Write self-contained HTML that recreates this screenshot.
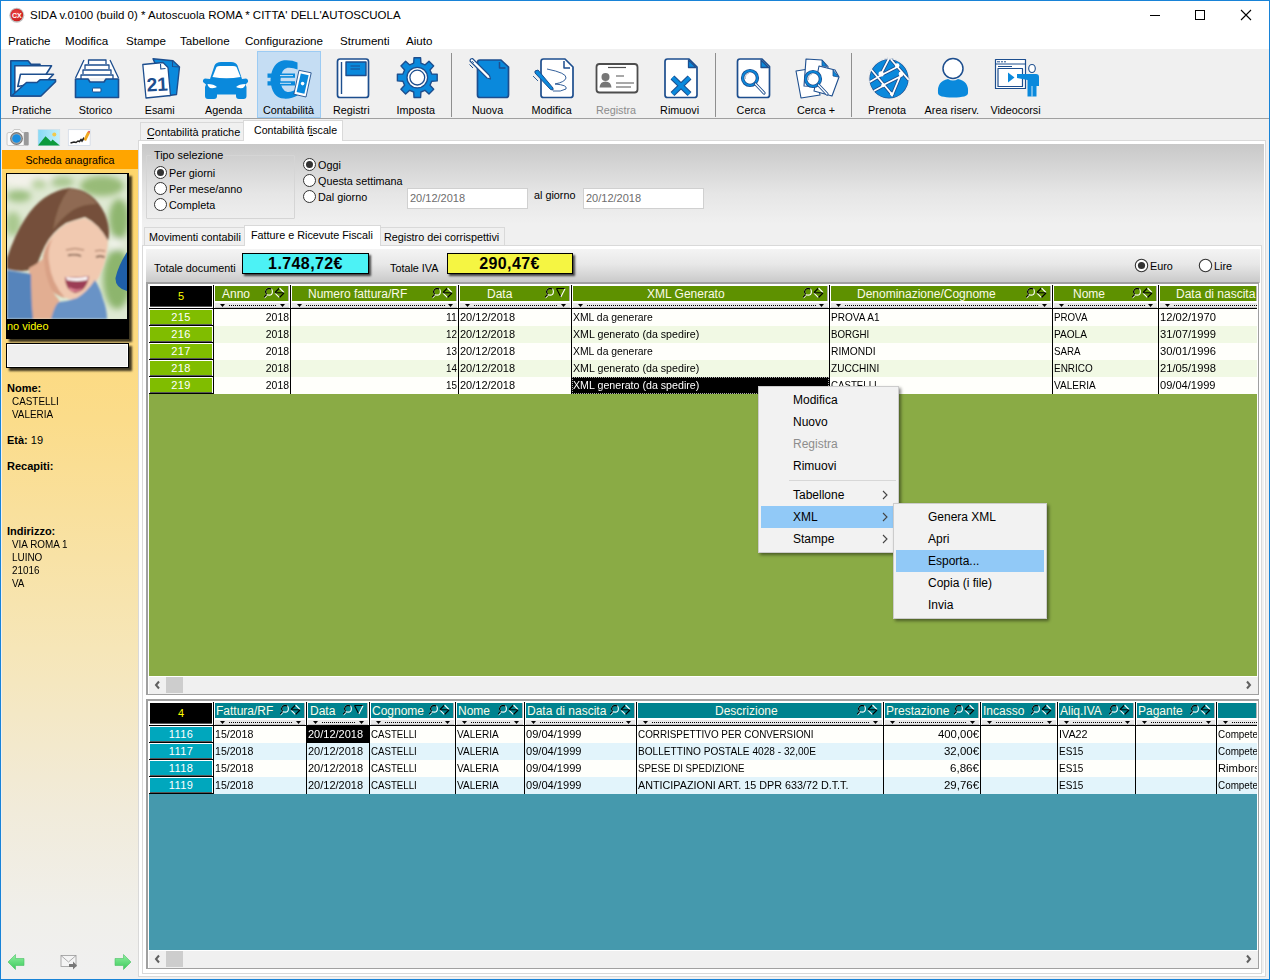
<!DOCTYPE html>
<html><head><meta charset="utf-8">
<style>
*{margin:0;padding:0;box-sizing:border-box}
html,body{width:1270px;height:980px;overflow:hidden}
body{position:relative;background:#f0f0f0;font-family:"Liberation Sans",sans-serif;font-size:12px;color:#000}
.a{position:absolute}
.t{position:absolute;white-space:nowrap;line-height:1}
</style></head><body>
<!-- window border -->
<div class="a" style="left:0;top:0;width:1270px;height:980px;border:1px solid #1883d7"></div>
<!-- title bar + menu -->
<div class="a" style="left:1px;top:1px;width:1268px;height:48px;background:#fff"></div>
<div class="t" style="left:30px;top:10px;font-size:11.5px">SIDA v.0100 (build 0) * Autoscuola ROMA * CITTA' DELL'AUTOSCUOLA</div>
<div class="t" style="left:8px;top:35px;font-size:11.6px">Pratiche</div>
<div class="t" style="left:65px;top:35px;font-size:11.6px">Modifica</div>
<div class="t" style="left:126px;top:35px;font-size:11.6px">Stampe</div>
<div class="t" style="left:180px;top:35px;font-size:11.6px">Tabellone</div>
<div class="t" style="left:245px;top:35px;font-size:11.6px">Configurazione</div>
<div class="t" style="left:340px;top:35px;font-size:11.6px">Strumenti</div>
<div class="t" style="left:406px;top:35px;font-size:11.6px">Aiuto</div>
<!-- title icon + controls -->
<svg class="a" style="left:0;top:0" width="1270" height="30" viewBox="0 0 1270 30">
<defs><radialGradient id="rg" cx="0.45" cy="0.4" r="0.6"><stop offset="0" stop-color="#f04848"/><stop offset="1" stop-color="#c81e1e"/></radialGradient></defs>
<circle cx="16.8" cy="15.2" r="7.5" fill="#9a9a9a" opacity="0.6"/>
<circle cx="16.8" cy="15" r="6.3" fill="url(#rg)"/>
<text x="16.8" y="17.6" font-family="Liberation Sans" font-size="7" font-weight="bold" fill="#fff" text-anchor="middle">CX</text>
<path d="M1150,15.5 L1160,15.5" stroke="#000" stroke-width="1"/>
<rect x="1195.5" y="10.5" width="9" height="9" fill="none" stroke="#000" stroke-width="1"/>
<path d="M1241,10 L1251,20 M1251,10 L1241,20" stroke="#000" stroke-width="1.1"/>
</svg>

<!-- toolbar -->
<div class="a" style="left:1px;top:49px;width:1268px;height:70px;background:#f0f0f0;border-bottom:1px solid #a0a0a0"></div>
<div class="a" style="left:257px;top:51px;width:64px;height:67px;background:#c5ddf3;border:1px solid #9ccbf3"></div>
<div class="a" style="left:451px;top:53px;width:1px;height:64px;background:#8f8f8f"></div>
<div class="a" style="left:715px;top:53px;width:1px;height:64px;background:#8f8f8f"></div>
<div class="a" style="left:851px;top:53px;width:1px;height:64px;background:#8f8f8f"></div>
<svg class="a" style="left:0;top:0" width="1270" height="120" viewBox="0 0 1270 120">
<g stroke="#1d4e8e" stroke-width="1.6" stroke-linejoin="round" fill="#0a89dc">
<!-- folder 10-56, 60-96 -->
<path d="M10.8,96 L10.8,60.8 L28,60.8 L31,64.2 L40,64.2 L40,96 Z"/>
<path d="M14.8,65.8 L51.5,65.8 L46,74.5 L46,80 L14.8,93 Z" fill="#fff"/>
<path d="M20.5,74.2 L53.5,74.2 L47,81 L17.8,86.5 Z" fill="#fff"/>
<path d="M11.5,96 L26.5,82.5 L37,82.5 L40,79.8 L55.5,79.8 L55.5,81.8 L41,96 Z"/>
<!-- drawer 75-119, 59-98 -->
<path d="M75.5,78 L84,60 L110,60 L118.5,78 Z" fill="#fff" stroke="none"/><path d="M75.5,78 L84,60 M110,60 L118.5,78" fill="none" stroke-width="1.3"/>
<path d="M88.5,64 L88.5,60 L106,60 L106,64 M85,69 L85,65 L109,65 L109,69 M83,74 L83,70 L111,70 L111,74 M81,79 L81,75 L113,75 L113,79" fill="none" stroke-width="1.3"/>
<path d="M75.5,79 L88,79 L90,82 L104,82 L106,79 L118.5,79 L118.5,97.5 L75.5,97.5 Z"/>
<rect x="92.5" y="88" width="8.5" height="4" rx="1" fill="#fff" stroke-width="1"/>
<!-- esami 142-180, 58-98 -->
<path d="M153,58.8 L173,60.8 L179.5,67 L176.5,94.5 L169,95.5 Z" stroke-width="1.4"/>
<path d="M172.5,61 L172.5,66.5 L179,67" fill="none" stroke-width="1.1"/>
<path d="M142.8,64.5 L163,62.5 L168,67.5 L170.5,95.5 L146,98 Z" fill="#fff" stroke-width="1.3"/>
<path d="M160.5,64 L160.8,69 L165.5,68.5" fill="none" stroke-width="1.1"/>
<text x="146.5" y="91" font-family="Liberation Sans" font-weight="bold" font-size="19" fill="#1d4e8e" stroke="none" transform="rotate(-3 157 84)">21</text>
<!-- car 202-248, 62-99 -->
<path d="M210,79 L214.5,65.5 Q216,62 221,62 L231,62 Q236,62 237.5,65.5 L242,79 L246,78.5 Q248.5,79 248,82 L245.5,84.5 L246.5,87 L246.5,96 Q246.5,99 243.5,99 L239,99 Q236,99 236,96 L236,94.5 L217,94.5 L217,96 Q217,99 214,99 L208,99 Q205,99 205,96 L205,87 L206,84.5 L203,82 Q202.5,79 205,78.5 Z" stroke="none"/>
<path d="M212.5,77 L216.5,67 Q217.5,66 220,66 L233,66 Q235.5,66 236.5,67 L240.5,77 Q226.5,79.5 212.5,77 Z" fill="#fff" stroke="none"/>
<path d="M207.5,84 Q214,84 217,87 Q215,88.5 210,88 Q207.5,86.5 207.5,84 Z M245.5,84 Q239,84 236,87 Q238,88.5 243,88 Q245.5,86.5 245.5,84 Z" fill="#fff" stroke="none"/>
<!-- euro 268-297 60-99 ; bill 296-311 70-97 -->
<path d="M297.5,62.5 Q292,59.8 284,60.3 Q271.5,62.5 270.5,80 Q271.5,97.8 284,98.6 Q292,99 297.5,95.5 L297.5,88 Q292.5,92.3 287.5,92 Q281,90.8 280.5,80 Q281,68.8 287.5,67.8 Q292.5,67.3 297.5,69.5 Z" stroke="none"/>
<path d="M267.5,73.5 L295,73.5 L295,77.8 L267.5,77.8 Z M267.5,81.2 L295,81.2 L295,85.5 L267.5,85.5 Z" stroke="none"/>
<path d="M280,75.6 L293,75.6 M280,83.3 L291,83.3" stroke="#e8f2fa" stroke-width="0.9"/>
<path d="M299,70.3 L311.2,72.8 L306,97 L293.8,94.2 Z" fill="#fff" stroke="#1d4e8e" stroke-width="0.9"/>
<path d="M300.8,73.5 L308.6,75.2 L304.4,93.8 L296.6,92 Z" stroke="none"/>
<circle cx="302.6" cy="83.6" r="1.8" fill="#fff" stroke="none"/>
<!-- registri 337-369 58-98 -->
<rect x="337.5" y="59" width="31" height="38.5" rx="2.5" fill="#fff" stroke-width="1.7"/>
<path d="M341.5,62 L341.5,94" fill="none" stroke-width="1.4"/>
<rect x="346" y="62" width="20" height="13.5" stroke-width="1.4"/>
<path d="M350.5,66 L360,66 M350.5,69 L360,69" stroke-width="1.1" fill="none"/>
<!-- gear 397-437 57-98 center 417,77.5 -->
<path id="gear" d="M413.7,63.2 L414.0,57.7 L420.6,57.7 L420.9,63.2 L424.9,64.9 L429.0,61.2 L433.7,65.9 L430.0,70.0 L431.7,74.0 L437.2,74.3 L437.2,80.9 L431.7,81.2 L430.0,85.2 L433.7,89.3 L429.0,94.0 L424.9,90.3 L420.9,92.0 L420.6,97.5 L414.0,97.5 L413.7,92.0 L409.7,90.3 L405.6,94.0 L400.9,89.3 L404.6,85.2 L402.9,81.2 L397.4,80.9 L397.4,74.3 L402.9,74.0 L404.6,70.0 L400.9,65.9 L405.6,61.2 L409.7,64.9 Z" stroke-width="1.4"/>
<circle cx="417.3" cy="77.6" r="10.3" fill="#fff" stroke-width="1.3"/>
<circle cx="417.3" cy="77.6" r="7.4" fill="#fff" stroke-width="1.3"/>
<!-- nuova 477-509 59-98 -->
<path d="M480,60 L501,60 L508.5,67 L508.5,95 Q508.5,97.5 506,97.5 L480,97.5 Q477.5,97.5 477.5,95 L477.5,62.5 Q477.5,60 480,60 Z" stroke-width="1.7"/>
<path d="M499.5,62 L499.5,68 L505.5,68" fill="none" stroke-width="1.5"/>
<path d="M472.5,58.5 L489.5,75.5 L490.5,79 L487,78 L470,61 Q470,58.5 472.5,58.5 Z" fill="#fff" stroke-width="1.1"/>
<path d="M469.5,64.5 L473,68" fill="none" stroke-width="1"/><path d="M472,61 L474,63" fill="none" stroke-width="0.8"/>
<!-- modifica 541-573 58-98 -->
<path d="M543.5,59 L565,59 L573,67 L573,95 Q573,97.5 570.5,97.5 L543.5,97.5 Q541,97.5 541,95 L541,61.5 Q541,59 543.5,59 Z" fill="#fff" stroke-width="1.7"/>
<path d="M564,61 L564,68 L570,68" fill="none" stroke-width="1.5"/>
<path d="M547,69 Q567,73 566,78 Q565,82 555,84 Q568,85 566,89 Q561,92 553,91" fill="none" stroke-width="0.9"/>
<path d="M535,71 L538,70 L553,88 L553,90 L550.5,89.5 L535,73 Z" stroke-width="1"/>
<path d="M533,76 L538,81" fill="none" stroke-width="0.9"/>
<!-- registra card 595-638 63-93 -->
<rect x="596.5" y="64" width="41" height="28.5" rx="3" fill="#fff" stroke="#4d4d4d" stroke-width="1.8"/>
<path d="M608,67.5 L626,67.5" stroke="#4d4d4d" stroke-width="1.2" fill="none"/>
<circle cx="605.5" cy="77" r="4" fill="#777" stroke="none"/>
<path d="M599.5,87.5 Q600,81.5 605.5,81.5 Q611,81.5 611.5,87.5 Z" fill="#777" stroke="none"/>
<path d="M616,76 L624,76 M616,83 L634,83 M616,87 L631,87" stroke="#8c8c8c" stroke-width="1.3" fill="none"/>
<!-- rimuovi 665-698 58-98 -->
<path d="M667.5,59 L689,59 L697,67 L697,95 Q697,97.5 694.5,97.5 L667.5,97.5 Q665,97.5 665,95 L665,61.5 Q665,59 667.5,59 Z" fill="#fff" stroke-width="1.7"/>
<path d="M688.5,60 L688.5,67.5 L696,67.5 Z" stroke-width="1.3"/>
<path d="M672.5,77.5 L689.5,94 M689.5,77.5 L672.5,94" stroke="#1d4e8e" stroke-width="5.6" stroke-linecap="butt"/><path d="M672.5,77.5 L689.5,94 M689.5,77.5 L672.5,94" stroke="#0a89dc" stroke-width="3.6" stroke-linecap="butt"/>
<!-- cerca 737-770 58-98 -->
<path d="M740,59 L762,59 L769.5,66.5 L769.5,95 Q769.5,97.5 767,97.5 L740,97.5 Q737.5,97.5 737.5,95 L737.5,61.5 Q737.5,59 740,59 Z" fill="#fff" stroke-width="1.7"/>
<path d="M761,60 L761,67.5 L768.5,67.5 Z" stroke-width="1.3"/>
<circle cx="750" cy="78" r="7.4" fill="#fff" stroke="#1d4e8e" stroke-width="3.4"/><circle cx="750" cy="78" r="7.4" fill="none" stroke="#0a89dc" stroke-width="1.8"/><path d="M745.5,79 A5,5 0 0 1 749,73" fill="none" stroke="#9aa8b8" stroke-width="0.8"/>
<path d="M755.5,84 L764,93" stroke="#1d4e8e" stroke-width="3.2" stroke-linecap="round"/>
<path d="M755.5,84 L764,93" stroke="#fff" stroke-width="1.3" stroke-linecap="round"/>
<!-- cerca + 795-839 58-98 -->
<path d="M796,71 L815,68 L820,95 L801,98 Z" fill="#fff" stroke-width="1.1"/>
<path d="M806,59 L822,60 L828,66.5 L826,87 L804,86 Z" fill="#fff" stroke-width="1.1"/>
<path d="M822,60 L822,66 L827,66.5 Z" stroke-width="0.8"/>
<path d="M819,66 L835,70 L839,77 L832,96 L814,91 Z" fill="#fff" stroke-width="1.1"/>
<path d="M833,70 L833,76 L838.5,77 Z" stroke-width="0.8"/>
<circle cx="813" cy="79" r="7.4" fill="#fff" stroke="#1d4e8e" stroke-width="3.4"/><circle cx="813" cy="79" r="7.4" fill="none" stroke="#0a89dc" stroke-width="1.8"/><path d="M808.5,80 A5,5 0 0 1 812,74" fill="none" stroke="#9aa8b8" stroke-width="0.8"/>
<path d="M818.5,85 L827,94" stroke="#1d4e8e" stroke-width="3.2" stroke-linecap="round"/>
<path d="M818.5,85 L827,94" stroke="#fff" stroke-width="1.3" stroke-linecap="round"/>
<!-- globe 869-909 59-98 -->
<circle cx="889" cy="78.8" r="19.6" stroke-width="1.3"/>
<path d="M889,58.5 L881.1,73.9 M871,69.3 L891.7,94.1 M869.7,82.1 L881.1,75.3 L898.1,66.6 M884.3,84.4 L902.7,75.3 M890.8,59.2 L908.7,79.9 M900.9,74.3 L891.7,96.4 M873.8,90.9 L883.4,85.8" stroke="#1d4e8e" stroke-width="3.4" fill="none"/>
<path d="M889,58.5 L881.1,73.9 M871,69.3 L891.7,94.1 M869.7,82.1 L881.1,75.3 L898.1,66.6 M884.3,84.4 L902.7,75.3 M890.8,59.2 L908.7,79.9 M900.9,74.3 L891.7,96.4 M873.8,90.9 L883.4,85.8" stroke="#fff" stroke-width="1.7" fill="none"/>
<circle cx="881.1" cy="73.9" r="2.6" fill="#fff" stroke="none"/>
<circle cx="897.2" cy="65.6" r="2.3" fill="#fff" stroke="none"/>
<circle cx="900.9" cy="73.9" r="2.3" fill="#fff" stroke="none"/>
<circle cx="883" cy="85.4" r="1.8" fill="#fff" stroke="none"/>
<circle cx="891.7" cy="94.1" r="1.8" fill="#fff" stroke="none"/>
<circle cx="889" cy="78.8" r="20.2" fill="none" stroke="#f0f0f0" stroke-width="1.2"/>
<!-- person 937-969 58-98 -->
<circle cx="953" cy="68.5" r="10" fill="#fff" stroke-width="1.5"/>
<path d="M938,93 Q937,81 948,79 Q953,82 958,79 Q969,81 968,93 Q968,97.5 953,97.5 Q938,97.5 938,93 Z" stroke="none"/>
<!-- video 995-1039 59-97 -->
<rect x="995.5" y="59.5" width="30" height="29" fill="#fff" stroke-width="1.2"/>
<path d="M995.5,64 L1025.5,64 M997,61.8 L1000,61.8 M1001,61.8 L1003,61.8 M1004,61.8 L1006,61.8 M998,66.5 L1012,66.5" stroke-width="1" fill="none"/>
<rect x="998" y="68.5" width="24.5" height="18" fill="#fff" stroke-width="1.2"/>
<path d="M1008,72.5 L1014.5,77.5 L1008,82.5 Z" stroke="none"/>
<ellipse cx="1032" cy="68.5" rx="3.3" ry="4" fill="#fff" stroke-width="1.1"/>
<path d="M1017,74 L1036,74 Q1039,74 1039,77 L1039,86 L1036.5,86 L1036.5,96.5 L1027.5,96.5 L1027.5,80 L1017,78 Z" stroke="none"/>
<path d="M1032,86 L1032,96.5" stroke="#fff" stroke-width="0.8"/>
</g>
</svg>

<div class="t" style="left:-8.5px;top:105px;width:80px;text-align:center;font-size:10.8px;color:#000">Pratiche</div>
<div class="t" style="left:55.5px;top:105px;width:80px;text-align:center;font-size:10.8px;color:#000">Storico</div>
<div class="t" style="left:119.7px;top:105px;width:80px;text-align:center;font-size:10.8px;color:#000">Esami</div>
<div class="t" style="left:183.7px;top:105px;width:80px;text-align:center;font-size:10.8px;color:#000">Agenda</div>
<div class="t" style="left:248.5px;top:105px;width:80px;text-align:center;font-size:10.8px;color:#000">Contabilità</div>
<div class="t" style="left:311.3px;top:105px;width:80px;text-align:center;font-size:10.8px;color:#000">Registri</div>
<div class="t" style="left:375.8px;top:105px;width:80px;text-align:center;font-size:10.8px;color:#000">Imposta</div>
<div class="t" style="left:447.6px;top:105px;width:80px;text-align:center;font-size:10.8px;color:#000">Nuova</div>
<div class="t" style="left:511.6px;top:105px;width:80px;text-align:center;font-size:10.8px;color:#000">Modifica</div>
<div class="t" style="left:576.0px;top:105px;width:80px;text-align:center;font-size:10.8px;color:#8c8c8c">Registra</div>
<div class="t" style="left:639.6px;top:105px;width:80px;text-align:center;font-size:10.8px;color:#000">Rimuovi</div>
<div class="t" style="left:711.0px;top:105px;width:80px;text-align:center;font-size:10.8px;color:#000">Cerca</div>
<div class="t" style="left:776.0px;top:105px;width:80px;text-align:center;font-size:10.8px;color:#000">Cerca +</div>
<div class="t" style="left:847.0px;top:105px;width:80px;text-align:center;font-size:10.8px;color:#000">Prenota</div>
<div class="t" style="left:911.8px;top:105px;width:80px;text-align:center;font-size:10.8px;color:#000">Area riserv.</div>
<div class="t" style="left:975.5px;top:105px;width:80px;text-align:center;font-size:10.8px;color:#000">Videocorsi</div>
<!-- left panel -->
<div class="a" style="left:1px;top:120px;width:137px;height:859px;background:#f0f0f0"></div>
<svg class="a" style="left:0;top:120px" width="100" height="30" viewBox="0 120 100 30">
<path d="M7,134 Q7,132.5 9,132.5 L12,132.5 L14,129.5 L20,129.5 L22,132.5 L24,132.5 L24,145.5 L8.5,145.5 Q7,145.5 7,144 Z" fill="#fafafa" stroke="#c4c4c4" stroke-width="0.9"/>
<rect x="24" y="132" width="4.7" height="13.5" rx="1" fill="#999"/>
<circle cx="16.5" cy="138.5" r="6.4" fill="#787878"/>
<circle cx="16.5" cy="138.5" r="5.3" fill="#a8a8a8"/>
<circle cx="16.5" cy="138.5" r="4.3" fill="#1a8ee0"/>
<defs><linearGradient id="sky" x1="0" y1="0" x2="1" y2="0"><stop offset="0" stop-color="#86d9f6"/><stop offset="1" stop-color="#c3effb"/></linearGradient></defs>
<rect x="38" y="129.5" width="21.8" height="16" fill="url(#sky)" stroke="#d0dde6" stroke-width="0.6"/>
<path d="M38,145.5 L45.5,136.2 L51,141.5 L52.5,139.5 L59.8,145.5 Z" fill="#0c9a3c"/>
<circle cx="54.3" cy="134.6" r="2" fill="#f2c94c"/>
<rect x="68.3" y="129.7" width="21.8" height="15.8" fill="#fff" stroke="#ccd6e3" stroke-width="0.7"/>
<path d="M70.5,143 L74,142 L76,142.5 L78,141 L79.5,141.5 L81,139.5 L82,141 L83.5,138.5 L84.5,140" fill="none" stroke="#222" stroke-width="1.5"/>
<path d="M83.5,139.5 L87.5,131.5 L90,133 L86,141 Z" fill="#f0a820"/>
<path d="M88,132 L88.8,130.8 L90,131.5 L89.5,133 Z" fill="#e03030"/>
</svg>
<div class="a" style="left:2px;top:150px;width:136px;height:19px;background:#ffa500"></div>
<div class="t" style="left:2px;top:155px;width:136px;text-align:center;font-size:10.7px">Scheda anagrafica</div>
<div class="a" style="left:2px;top:169px;width:136px;height:810px;background:linear-gradient(#fed66b 0px,#fbdc8a 250px,#f6e6b8 480px,#f1ebda 640px,#f0efea 740px,#f0f0f0 810px)"></div>
<!-- photo -->
<div class="a" style="left:6px;top:173px;width:123px;height:166px;background:#000;box-shadow:3px 3px 2px rgba(0,0,0,0.75)"></div>
<svg class="a" style="left:7px;top:174px" width="120" height="145" viewBox="0 0 120 145">
<defs>
<filter id="bl" x="-30%" y="-30%" width="160%" height="160%"><feGaussianBlur stdDeviation="3.2"/></filter>
<filter id="bl2" x="-10%" y="-10%" width="120%" height="120%"><feGaussianBlur stdDeviation="0.8"/></filter>
</defs>
<rect width="120" height="145" fill="#dfe9d3"/>
<g filter="url(#bl)">
<ellipse cx="20" cy="5" rx="30" ry="8" fill="#f3f2ea"/>
<ellipse cx="12" cy="22" rx="12" ry="6" fill="#9fc183"/>
<ellipse cx="55" cy="8" rx="12" ry="5" fill="#a8c68e"/>
<ellipse cx="95" cy="12" rx="22" ry="10" fill="#98bb78"/>
<ellipse cx="112" cy="45" rx="10" ry="20" fill="#8fb670"/>
<ellipse cx="6" cy="50" rx="8" ry="12" fill="#aac990"/>
<ellipse cx="15" cy="70" rx="9" ry="6" fill="#eef2e6"/>
<ellipse cx="110" cy="105" rx="14" ry="30" fill="#8db56d"/>
<ellipse cx="108" cy="70" rx="7" ry="6" fill="#f0f3ea"/>
<ellipse cx="32" cy="10" rx="8" ry="5" fill="#b9d2a0"/>
</g>
<g filter="url(#bl2)">
<path d="M62,14 Q86,15 98,40 Q104,55 101,67 Q92,50 78,43 Q68,46 59,49 Q45,58 38,72 Q32,84 30,92 Q22,100 0,95 L0,84 Q8,60 18,45 Q35,18 62,14 Z" fill="#74503a"/>
<path d="M62,15 Q80,16 90,30 Q76,30 66,36 Q54,44 46,56 Q50,30 62,15 Z" fill="#8f6a52"/>
<path d="M36,83 Q38,64 59,50 Q68,46 78,44 Q92,50 101,67 Q100,85 95,96 Q90,110 83,113 Q76,124 66,126 Q50,122 44,116 Q34,100 36,83 Z" fill="#f1c9b0"/>
<path d="M36,83 Q34,100 44,116 Q50,122 58,124 Q44,108 42,88 Q40,74 46,64 Q38,72 36,83 Z" fill="#d9a186"/>
<path d="M22,94 Q30,90 37,84 Q38,110 52,126 Q54,136 46,145 L25,145 Z" fill="#e2ae92"/>
<path d="M0,96 Q12,98 24,100 Q24,125 26,145 L0,145 Z" fill="#5784bb"/>
<path d="M44,145 Q48,130 52,128 Q62,127 70,124 Q80,118 88,106 Q94,116 96,125 Q100,135 100,145 Z" fill="#6993c6"/>
<path d="M58,103 Q70,104 82,102 Q80,117 68,119 Q58,116 58,103 Z" fill="#9c3e55"/>
<path d="M59,103 Q70,105 81,102.5 L80,106 Q70,108 60,106 Z" fill="#fff"/>
<path d="M62,113 Q69,118 76,114 Q70,120 63,116 Z" fill="#e58a9a"/>
<path d="M61,81.5 Q67,79.5 74,82 M89,83 Q93,81.5 97.5,83" stroke="#5a3a2a" stroke-width="1.4" fill="none"/>
<path d="M59,76 Q68,73 77,76 M88,77 Q93,75.5 98,77" stroke="#9a6a52" stroke-width="1" fill="none"/>
</g>
<path d="M120,78 Q111,92 108.5,104 Q108,114 120,117 Z" fill="#1f5fa8"/>
</svg>
<div class="t" style="left:7px;top:321px;font-size:11px;color:#ffff00">no video</div>
<div class="a" style="left:6px;top:343px;width:123px;height:25px;background:#efefef;border:1px solid #000;box-shadow:inset 0 0 0 1px #fff,3px 3px 2px rgba(0,0,0,0.75)"></div>
<div class="t" style="left:7px;top:383px;font-size:11px;font-weight:bold">Nome:</div>
<div class="t" style="left:12px;top:396px;font-size:11px;transform:scaleX(0.9);transform-origin:0 0">CASTELLI</div>
<div class="t" style="left:12px;top:409px;font-size:11px;transform:scaleX(0.9);transform-origin:0 0">VALERIA</div>
<div class="t" style="left:7px;top:435px;font-size:11px"><b>Età:</b> 19</div>
<div class="t" style="left:7px;top:461px;font-size:11px;font-weight:bold">Recapiti:</div>
<div class="t" style="left:7px;top:526px;font-size:11px;font-weight:bold">Indirizzo:</div>
<div class="t" style="left:12px;top:539px;font-size:11px;transform:scaleX(0.9);transform-origin:0 0">VIA ROMA 1</div>
<div class="t" style="left:12px;top:552px;font-size:11px;transform:scaleX(0.9);transform-origin:0 0">LUINO</div>
<div class="t" style="left:12px;top:565px;font-size:11px;transform:scaleX(0.9);transform-origin:0 0">21016</div>
<div class="t" style="left:12px;top:578px;font-size:11px;transform:scaleX(0.9);transform-origin:0 0">VA</div>
<svg class="a" style="left:0;top:945px" width="140" height="30" viewBox="0 945 140 30">
<defs><linearGradient id="grn" x1="0" y1="0" x2="0" y2="1"><stop offset="0" stop-color="#8ff0a0"/><stop offset="1" stop-color="#3cc95a"/></linearGradient></defs>
<path d="M8,962 L15.5,954.5 L15.5,958.5 L24,958.5 L24,965.5 L15.5,965.5 L15.5,969.5 Z" fill="url(#grn)" stroke="#4cc064" stroke-width="0.6"/>
<path d="M131,962 L123.5,954.5 L123.5,958.5 L115,958.5 L115,965.5 L123.5,965.5 L123.5,969.5 Z" fill="url(#grn)" stroke="#4cc064" stroke-width="0.6"/>
<rect x="61" y="955.5" width="15" height="11" fill="#f4f4f4" stroke="#9a9a9a" stroke-width="0.8"/>
<path d="M61,955.5 L68.5,962 L76,955.5" fill="none" stroke="#9a9a9a" stroke-width="0.8"/>
<path d="M69,964 L73,964 L73,961.5 L77,965.5 L73,969.5 L73,967 L69,967 Z" fill="#777"/>
</svg>
<!-- right outer tab page -->
<div class="a" style="left:140px;top:122px;width:104px;height:19px;background:#f0f0f0;border:1px solid #d9d9d9;border-bottom:none"></div>
<div class="t" style="left:147px;top:127px;font-size:10.9px">Contabilità pratiche</div>
<div class="a" style="left:147px;top:138px;width:7px;height:1px;background:#000"></div>
<div class="a" style="left:138px;top:140px;width:1128px;height:837px;background:#fff;border:1px solid #d9d9d9"></div>
<div class="a" style="left:243px;top:120px;width:100px;height:21px;background:#fff;border:1px solid #d9d9d9;border-bottom:none"></div><div class="a" style="left:244px;top:140px;width:98px;height:2px;background:#fff"></div>
<div class="t" style="left:254px;top:125px;font-size:10.6px">Contabilità fiscale</div>
<div class="a" style="left:309px;top:135px;width:4px;height:1px;background:#000"></div>
<div class="a" style="left:142px;top:144px;width:1122px;height:829px;background:linear-gradient(#c8c8c8 0px,#e6e6e6 50px,#f0f0f0 80px,#f0f0f0 100%)"></div>
<!-- group box -->
<div class="a" style="left:146px;top:155px;width:149px;height:64px;border:1px solid #d5d5d5;border-radius:1px"></div>
<div class="a" style="left:151px;top:149px;width:73px;height:12px;background:linear-gradient(#cbcbcb,#d2d2d2)"></div>
<div class="t" style="left:154px;top:150.0px;font-size:10.8px">Tipo selezione</div>
<svg class="a" style="left:140px;top:150px" width="200" height="70" viewBox="140 150 200 70">
<g fill="#fff" stroke="#333" stroke-width="1">
<circle cx="160.5" cy="172.5" r="6"/><circle cx="160.5" cy="188.5" r="6"/><circle cx="160.5" cy="204.5" r="6"/>
<circle cx="309.5" cy="164.5" r="6"/><circle cx="309.5" cy="180.5" r="6"/><circle cx="309.5" cy="196.5" r="6"/>
</g>
<circle cx="160.5" cy="172.5" r="3.5" fill="#333"/>
<circle cx="309.5" cy="164.5" r="3.5" fill="#333"/>
</svg>
<div class="t" style="left:169px;top:168.0px;font-size:10.8px">Per giorni</div>
<div class="t" style="left:169px;top:184.0px;font-size:10.8px">Per mese/anno</div>
<div class="t" style="left:169px;top:200.0px;font-size:10.8px">Completa</div>
<div class="t" style="left:318px;top:160.0px;font-size:10.8px">Oggi</div>
<div class="t" style="left:318px;top:176.0px;font-size:10.8px">Questa settimana</div>
<div class="t" style="left:318px;top:192.0px;font-size:10.8px">Dal giorno</div>
<div class="a" style="left:407px;top:188px;width:121px;height:21px;background:#fff;border:1px solid #d0d0d0"></div>
<div class="t" style="left:410px;top:193px;font-size:11px;color:#6d6d6d">20/12/2018</div>
<div class="t" style="left:534px;top:190.0px;font-size:10.8px">al giorno</div>
<div class="a" style="left:583px;top:188px;width:121px;height:21px;background:#fff;border:1px solid #d0d0d0"></div>
<div class="t" style="left:586px;top:193px;font-size:11px;color:#6d6d6d">20/12/2018</div>
<!-- inner tabs -->
<div class="a" style="left:144px;top:227px;width:101px;height:19px;background:#f0f0f0;border:1px solid #d9d9d9;border-bottom:none"></div>
<div class="t" style="left:149px;top:232px;font-size:10.8px">Movimenti contabili</div>
<div class="a" style="left:380px;top:227px;width:125px;height:19px;background:#f0f0f0;border:1px solid #d9d9d9;border-bottom:none"></div>
<div class="t" style="left:384px;top:232px;font-size:10.8px">Registro dei corrispettivi</div>
<div class="a" style="left:142px;top:245px;width:1120px;height:729px;background:#fff;border:1px solid #d9d9d9"></div>
<div class="a" style="left:244px;top:225px;width:137px;height:21px;background:#fff;border:1px solid #d9d9d9;border-bottom:none"></div><div class="a" style="left:245px;top:245px;width:135px;height:2px;background:#fff"></div>
<div class="t" style="left:251px;top:230.0px;font-size:10.8px">Fatture e Ricevute Fiscali</div>
<!-- totals panel -->
<div class="a" style="left:146px;top:249px;width:1114px;height:34px;background:linear-gradient(#f4f4f4 0px,#e8e8e8 15px,#c8c8c8 34px)"></div>
<div class="t" style="left:154px;top:263.0px;font-size:10.8px">Totale documenti</div>
<div class="a" style="left:242px;top:253px;width:127px;height:21px;background:#4cf2f5;border:1px solid #000;box-shadow:2px 2px 2px rgba(0,0,0,0.7)"></div>
<div class="t" style="left:242px;top:256px;width:127px;text-align:center;font-size:16px;font-weight:bold;letter-spacing:0.4px">1.748,72€</div>
<div class="t" style="left:390px;top:263.0px;font-size:10.8px">Totale IVA</div>
<div class="a" style="left:447px;top:253px;width:126px;height:21px;background:#f5f542;border:1px solid #000;box-shadow:2px 2px 2px rgba(0,0,0,0.7)"></div>
<div class="t" style="left:447px;top:256px;width:125px;text-align:center;font-size:16px;font-weight:bold;letter-spacing:0.4px">290,47€</div>
<svg class="a" style="left:1130px;top:255px" width="90" height="22" viewBox="1130 255 90 22">
<circle cx="1141.5" cy="265.5" r="6.2" fill="#fff" stroke="#333" stroke-width="1.1"/><circle cx="1141.5" cy="265.5" r="3.6" fill="#333"/>
<circle cx="1205.5" cy="265.5" r="6.2" fill="#fff" stroke="#333" stroke-width="1.1"/>
</svg>
<div class="t" style="left:1150px;top:261px;font-size:10.8px">Euro</div>
<div class="t" style="left:1214px;top:261px;font-size:10.8px">Lire</div>

<!-- GRIDS -->
<div class="a" style="left:146px;top:282px;width:1113px;height:413px;border-left:2px solid #a0a0a0;border-top:2px solid #a0a0a0;border-right:1px solid #a0a0a0;border-bottom:1px solid #a0a0a0;background:#fff"></div>
<div class="a" style="left:149px;top:284px;width:1108px;height:392px;background:#8aab45"></div>
<div class="a" style="left:149px;top:284px;width:1108px;height:110px;background:#fff"></div>
<div class="a" style="left:150px;top:286px;width:62px;height:21px;background:#000;border-bottom:1px solid #555"></div>
<div class="t" style="left:150px;top:291px;width:62px;text-align:center;font-size:11px;color:#ffff00">5</div>
<div class="a" style="left:149px;top:308px;width:1108px;height:1px;background:#000"></div>
<div class="a" style="left:215px;top:286px;width:74px;height:15px;background:#5e9100;border-right:1px solid #b4b4b4"></div>
<div class="t" style="left:222px;top:288px;font-size:12px;color:#fbfbe8">Anno</div>
<svg class="a" style="left:264px;top:287px" width="22" height="14" viewBox="0 0 22 14"><circle cx="5" cy="4.7" r="3.4" fill="none" stroke="#fff" stroke-width="1.1"/><path d="M2.6,7.1 A3.4,3.4 0 0 1 7.4,2.3" fill="none" stroke="#000" stroke-width="1.2"/><path d="M-0.3,10.6 L2.6,7.6" stroke="#000" stroke-width="1.2"/><path d="M0.5,11.2 L3.4,8.2" stroke="#fff" stroke-width="1"/><path d="M11,5.5 L15.5,1" stroke="#000" stroke-width="1.1" fill="none"/><path d="M15.5,1 L20,5.5" stroke="#fff" stroke-width="1.1" fill="none"/><path d="M11,6.2 L15.5,10.7" stroke="#fff" stroke-width="1.1" fill="none"/><path d="M20,6 L15.5,10.5" stroke="#000" stroke-width="1.1" fill="none"/><path d="M11,5.8 L19.5,5.8" stroke="#000" stroke-width="1" fill="none"/></svg>
<div class="a" style="left:215px;top:303px;width:74px;height:5px;background:#e8e8e8;border-bottom:1px solid #c8c8c8"></div><svg class="a" style="left:215px;top:303px" width="74" height="5" viewBox="0 0 74 5"><path d="M5,1 L10,1 L7.5,4 Z" fill="#000"/><path d="M65,1 L70,1 L67.5,4 Z" fill="#000"/><path d="M14,2.5 L62,2.5" stroke="#000" stroke-width="1" stroke-dasharray="1 1"/></svg>
<div class="a" style="left:292px;top:286px;width:165px;height:15px;background:#5e9100;border-right:1px solid #b4b4b4"></div>
<div class="t" style="left:308px;top:288px;font-size:12px;color:#fbfbe8">Numero fattura/RF</div>
<svg class="a" style="left:432px;top:287px" width="22" height="14" viewBox="0 0 22 14"><circle cx="5" cy="4.7" r="3.4" fill="none" stroke="#fff" stroke-width="1.1"/><path d="M2.6,7.1 A3.4,3.4 0 0 1 7.4,2.3" fill="none" stroke="#000" stroke-width="1.2"/><path d="M-0.3,10.6 L2.6,7.6" stroke="#000" stroke-width="1.2"/><path d="M0.5,11.2 L3.4,8.2" stroke="#fff" stroke-width="1"/><path d="M11,5.5 L15.5,1" stroke="#000" stroke-width="1.1" fill="none"/><path d="M15.5,1 L20,5.5" stroke="#fff" stroke-width="1.1" fill="none"/><path d="M11,6.2 L15.5,10.7" stroke="#fff" stroke-width="1.1" fill="none"/><path d="M20,6 L15.5,10.5" stroke="#000" stroke-width="1.1" fill="none"/><path d="M11,5.8 L19.5,5.8" stroke="#000" stroke-width="1" fill="none"/></svg>
<div class="a" style="left:292px;top:303px;width:165px;height:5px;background:#e8e8e8;border-bottom:1px solid #c8c8c8"></div><svg class="a" style="left:292px;top:303px" width="165" height="5" viewBox="0 0 165 5"><path d="M5,1 L10,1 L7.5,4 Z" fill="#000"/><path d="M156,1 L161,1 L158.5,4 Z" fill="#000"/><path d="M14,2.5 L153,2.5" stroke="#000" stroke-width="1" stroke-dasharray="1 1"/></svg>
<div class="a" style="left:460px;top:286px;width:110px;height:15px;background:#5e9100;border-right:1px solid #b4b4b4"></div>
<div class="t" style="left:487px;top:288px;font-size:12px;color:#fbfbe8">Data</div>
<svg class="a" style="left:545px;top:287px" width="22" height="14" viewBox="0 0 22 14"><circle cx="5" cy="4.7" r="3.4" fill="none" stroke="#fff" stroke-width="1.1"/><path d="M2.6,7.1 A3.4,3.4 0 0 1 7.4,2.3" fill="none" stroke="#000" stroke-width="1.2"/><path d="M-0.3,10.6 L2.6,7.6" stroke="#000" stroke-width="1.2"/><path d="M0.5,11.2 L3.4,8.2" stroke="#fff" stroke-width="1"/><path d="M11.5,1.5 L20,1.5 M11.5,1.5 L15.8,10" stroke="#000" stroke-width="1.1" fill="none"/><path d="M20,1.8 L15.8,10" stroke="#fff" stroke-width="1.1" fill="none"/></svg>
<div class="a" style="left:460px;top:303px;width:110px;height:5px;background:#e8e8e8;border-bottom:1px solid #c8c8c8"></div><svg class="a" style="left:460px;top:303px" width="110" height="5" viewBox="0 0 110 5"><path d="M5,1 L10,1 L7.5,4 Z" fill="#000"/><path d="M101,1 L106,1 L103.5,4 Z" fill="#000"/><path d="M14,2.5 L98,2.5" stroke="#000" stroke-width="1" stroke-dasharray="1 1"/></svg>
<div class="a" style="left:573px;top:286px;width:255px;height:15px;background:#5e9100;border-right:1px solid #b4b4b4"></div>
<div class="t" style="left:647px;top:288px;font-size:12px;color:#fbfbe8">XML Generato</div>
<svg class="a" style="left:803px;top:287px" width="22" height="14" viewBox="0 0 22 14"><circle cx="5" cy="4.7" r="3.4" fill="none" stroke="#fff" stroke-width="1.1"/><path d="M2.6,7.1 A3.4,3.4 0 0 1 7.4,2.3" fill="none" stroke="#000" stroke-width="1.2"/><path d="M-0.3,10.6 L2.6,7.6" stroke="#000" stroke-width="1.2"/><path d="M0.5,11.2 L3.4,8.2" stroke="#fff" stroke-width="1"/><path d="M11,5.5 L15.5,1" stroke="#000" stroke-width="1.1" fill="none"/><path d="M15.5,1 L20,5.5" stroke="#fff" stroke-width="1.1" fill="none"/><path d="M11,6.2 L15.5,10.7" stroke="#fff" stroke-width="1.1" fill="none"/><path d="M20,6 L15.5,10.5" stroke="#000" stroke-width="1.1" fill="none"/><path d="M11,5.8 L19.5,5.8" stroke="#000" stroke-width="1" fill="none"/></svg>
<div class="a" style="left:573px;top:303px;width:255px;height:5px;background:#e8e8e8;border-bottom:1px solid #c8c8c8"></div><svg class="a" style="left:573px;top:303px" width="255" height="5" viewBox="0 0 255 5"><path d="M5,1 L10,1 L7.5,4 Z" fill="#000"/><path d="M246,1 L251,1 L248.5,4 Z" fill="#000"/><path d="M14,2.5 L243,2.5" stroke="#000" stroke-width="1" stroke-dasharray="1 1"/></svg>
<div class="a" style="left:831px;top:286px;width:220px;height:15px;background:#5e9100;border-right:1px solid #b4b4b4"></div>
<div class="t" style="left:857px;top:288px;font-size:12px;color:#fbfbe8">Denominazione/Cognome</div>
<svg class="a" style="left:1026px;top:287px" width="22" height="14" viewBox="0 0 22 14"><circle cx="5" cy="4.7" r="3.4" fill="none" stroke="#fff" stroke-width="1.1"/><path d="M2.6,7.1 A3.4,3.4 0 0 1 7.4,2.3" fill="none" stroke="#000" stroke-width="1.2"/><path d="M-0.3,10.6 L2.6,7.6" stroke="#000" stroke-width="1.2"/><path d="M0.5,11.2 L3.4,8.2" stroke="#fff" stroke-width="1"/><path d="M11,5.5 L15.5,1" stroke="#000" stroke-width="1.1" fill="none"/><path d="M15.5,1 L20,5.5" stroke="#fff" stroke-width="1.1" fill="none"/><path d="M11,6.2 L15.5,10.7" stroke="#fff" stroke-width="1.1" fill="none"/><path d="M20,6 L15.5,10.5" stroke="#000" stroke-width="1.1" fill="none"/><path d="M11,5.8 L19.5,5.8" stroke="#000" stroke-width="1" fill="none"/></svg>
<div class="a" style="left:831px;top:303px;width:220px;height:5px;background:#e8e8e8;border-bottom:1px solid #c8c8c8"></div><svg class="a" style="left:831px;top:303px" width="220" height="5" viewBox="0 0 220 5"><path d="M5,1 L10,1 L7.5,4 Z" fill="#000"/><path d="M211,1 L216,1 L213.5,4 Z" fill="#000"/><path d="M14,2.5 L208,2.5" stroke="#000" stroke-width="1" stroke-dasharray="1 1"/></svg>
<div class="a" style="left:1054px;top:286px;width:103px;height:15px;background:#5e9100;border-right:1px solid #b4b4b4"></div>
<div class="t" style="left:1073px;top:288px;font-size:12px;color:#fbfbe8">Nome</div>
<svg class="a" style="left:1132px;top:287px" width="22" height="14" viewBox="0 0 22 14"><circle cx="5" cy="4.7" r="3.4" fill="none" stroke="#fff" stroke-width="1.1"/><path d="M2.6,7.1 A3.4,3.4 0 0 1 7.4,2.3" fill="none" stroke="#000" stroke-width="1.2"/><path d="M-0.3,10.6 L2.6,7.6" stroke="#000" stroke-width="1.2"/><path d="M0.5,11.2 L3.4,8.2" stroke="#fff" stroke-width="1"/><path d="M11,5.5 L15.5,1" stroke="#000" stroke-width="1.1" fill="none"/><path d="M15.5,1 L20,5.5" stroke="#fff" stroke-width="1.1" fill="none"/><path d="M11,6.2 L15.5,10.7" stroke="#fff" stroke-width="1.1" fill="none"/><path d="M20,6 L15.5,10.5" stroke="#000" stroke-width="1.1" fill="none"/><path d="M11,5.8 L19.5,5.8" stroke="#000" stroke-width="1" fill="none"/></svg>
<div class="a" style="left:1054px;top:303px;width:103px;height:5px;background:#e8e8e8;border-bottom:1px solid #c8c8c8"></div><svg class="a" style="left:1054px;top:303px" width="103" height="5" viewBox="0 0 103 5"><path d="M5,1 L10,1 L7.5,4 Z" fill="#000"/><path d="M94,1 L99,1 L96.5,4 Z" fill="#000"/><path d="M14,2.5 L91,2.5" stroke="#000" stroke-width="1" stroke-dasharray="1 1"/></svg>
<div class="a" style="left:1160px;top:286px;width:97px;height:15px;background:#5e9100;border-right:1px solid #b4b4b4"></div>
<div class="t" style="left:1176px;top:288px;font-size:12px;color:#fbfbe8">Data di nascita</div>
<div class="a" style="left:1160px;top:303px;width:97px;height:5px;background:#e8e8e8;border-bottom:1px solid #c8c8c8"></div><svg class="a" style="left:1160px;top:303px" width="97" height="5" viewBox="0 0 97 5"><path d="M5,1 L10,1 L7.5,4 Z" fill="#000"/><path d="M14,2.5 L97,2.5" stroke="#000" stroke-width="1" stroke-dasharray="1 1"/></svg>
<div class="a" style="left:214px;top:309px;width:1043px;height:17px;background:#fffffb"></div>
<div class="a" style="left:150px;top:310px;width:62px;height:15px;background:#80bd00;border-bottom:1px solid #555"></div>
<div class="a" style="left:149px;top:325px;width:64px;height:1px;background:#000"></div>
<div class="t" style="left:150px;top:312px;width:62px;text-align:center;font-size:11px;letter-spacing:0.4px;color:#fff">215</div>
<div class="t" style="left:214px;top:312px;width:75px;text-align:right;font-size:11px;color:#000;transform:scaleX(0.948);transform-origin:100% 0">2018</div>
<div class="t" style="left:291px;top:312px;width:166px;text-align:right;font-size:11px;color:#000;transform:scaleX(0.963);transform-origin:100% 0">11</div>
<div class="a" style="left:459px;top:309px;width:112px;height:17px;overflow:hidden"><div class="t" style="left:1px;top:3px;font-size:11px;color:#000;transform:scaleX(0.999);transform-origin:0 0">20/12/2018</div></div>
<div class="a" style="left:572px;top:309px;width:257px;height:17px;overflow:hidden"><div class="t" style="left:1px;top:3px;font-size:11px;color:#000;transform:scaleX(0.944);transform-origin:0 0">XML da generare</div></div>
<div class="a" style="left:830px;top:309px;width:222px;height:17px;overflow:hidden"><div class="t" style="left:1px;top:3px;font-size:11px;color:#000;transform:scaleX(0.915);transform-origin:0 0">PROVA A1</div></div>
<div class="a" style="left:1053px;top:309px;width:105px;height:17px;overflow:hidden"><div class="t" style="left:1px;top:3px;font-size:11px;color:#000;transform:scaleX(0.886);transform-origin:0 0">PROVA</div></div>
<div class="a" style="left:1159px;top:309px;width:98px;height:17px;overflow:hidden"><div class="t" style="left:1px;top:3px;font-size:11px;color:#000;transform:scaleX(1.017);transform-origin:0 0">12/02/1970</div></div>
<div class="a" style="left:214px;top:326px;width:1043px;height:17px;background:#f1f9e4"></div>
<div class="a" style="left:150px;top:327px;width:62px;height:15px;background:#80bd00;border-bottom:1px solid #555"></div>
<div class="a" style="left:149px;top:342px;width:64px;height:1px;background:#000"></div>
<div class="t" style="left:150px;top:329px;width:62px;text-align:center;font-size:11px;letter-spacing:0.4px;color:#fff">216</div>
<div class="t" style="left:214px;top:329px;width:75px;text-align:right;font-size:11px;color:#000;transform:scaleX(0.948);transform-origin:100% 0">2018</div>
<div class="t" style="left:291px;top:329px;width:166px;text-align:right;font-size:11px;color:#000;transform:scaleX(0.899);transform-origin:100% 0">12</div>
<div class="a" style="left:459px;top:326px;width:112px;height:17px;overflow:hidden"><div class="t" style="left:1px;top:3px;font-size:11px;color:#000;transform:scaleX(0.999);transform-origin:0 0">20/12/2018</div></div>
<div class="a" style="left:572px;top:326px;width:257px;height:17px;overflow:hidden"><div class="t" style="left:1px;top:3px;font-size:11px;color:#000;transform:scaleX(0.968);transform-origin:0 0">XML generato (da spedire)</div></div>
<div class="a" style="left:830px;top:326px;width:222px;height:17px;overflow:hidden"><div class="t" style="left:1px;top:3px;font-size:11px;color:#000;transform:scaleX(0.883);transform-origin:0 0">BORGHI</div></div>
<div class="a" style="left:1053px;top:326px;width:105px;height:17px;overflow:hidden"><div class="t" style="left:1px;top:3px;font-size:11px;color:#000;transform:scaleX(0.920);transform-origin:0 0">PAOLA</div></div>
<div class="a" style="left:1159px;top:326px;width:98px;height:17px;overflow:hidden"><div class="t" style="left:1px;top:3px;font-size:11px;color:#000;transform:scaleX(1.017);transform-origin:0 0">31/07/1999</div></div>
<div class="a" style="left:214px;top:343px;width:1043px;height:17px;background:#fffffb"></div>
<div class="a" style="left:150px;top:344px;width:62px;height:15px;background:#80bd00;border-bottom:1px solid #555"></div>
<div class="a" style="left:149px;top:359px;width:64px;height:1px;background:#000"></div>
<div class="t" style="left:150px;top:346px;width:62px;text-align:center;font-size:11px;letter-spacing:0.4px;color:#fff">217</div>
<div class="t" style="left:214px;top:346px;width:75px;text-align:right;font-size:11px;color:#000;transform:scaleX(0.948);transform-origin:100% 0">2018</div>
<div class="t" style="left:291px;top:346px;width:166px;text-align:right;font-size:11px;color:#000;transform:scaleX(0.899);transform-origin:100% 0">13</div>
<div class="a" style="left:459px;top:343px;width:112px;height:17px;overflow:hidden"><div class="t" style="left:1px;top:3px;font-size:11px;color:#000;transform:scaleX(0.999);transform-origin:0 0">20/12/2018</div></div>
<div class="a" style="left:572px;top:343px;width:257px;height:17px;overflow:hidden"><div class="t" style="left:1px;top:3px;font-size:11px;color:#000;transform:scaleX(0.944);transform-origin:0 0">XML da generare</div></div>
<div class="a" style="left:830px;top:343px;width:222px;height:17px;overflow:hidden"><div class="t" style="left:1px;top:3px;font-size:11px;color:#000;transform:scaleX(0.934);transform-origin:0 0">RIMONDI</div></div>
<div class="a" style="left:1053px;top:343px;width:105px;height:17px;overflow:hidden"><div class="t" style="left:1px;top:3px;font-size:11px;color:#000;transform:scaleX(0.885);transform-origin:0 0">SARA</div></div>
<div class="a" style="left:1159px;top:343px;width:98px;height:17px;overflow:hidden"><div class="t" style="left:1px;top:3px;font-size:11px;color:#000;transform:scaleX(1.017);transform-origin:0 0">30/01/1996</div></div>
<div class="a" style="left:214px;top:360px;width:1043px;height:17px;background:#f1f9e4"></div>
<div class="a" style="left:150px;top:361px;width:62px;height:15px;background:#80bd00;border-bottom:1px solid #555"></div>
<div class="a" style="left:149px;top:376px;width:64px;height:1px;background:#000"></div>
<div class="t" style="left:150px;top:363px;width:62px;text-align:center;font-size:11px;letter-spacing:0.4px;color:#fff">218</div>
<div class="t" style="left:214px;top:363px;width:75px;text-align:right;font-size:11px;color:#000;transform:scaleX(0.948);transform-origin:100% 0">2018</div>
<div class="t" style="left:291px;top:363px;width:166px;text-align:right;font-size:11px;color:#000;transform:scaleX(0.899);transform-origin:100% 0">14</div>
<div class="a" style="left:459px;top:360px;width:112px;height:17px;overflow:hidden"><div class="t" style="left:1px;top:3px;font-size:11px;color:#000;transform:scaleX(0.999);transform-origin:0 0">20/12/2018</div></div>
<div class="a" style="left:572px;top:360px;width:257px;height:17px;overflow:hidden"><div class="t" style="left:1px;top:3px;font-size:11px;color:#000;transform:scaleX(0.968);transform-origin:0 0">XML generato (da spedire)</div></div>
<div class="a" style="left:830px;top:360px;width:222px;height:17px;overflow:hidden"><div class="t" style="left:1px;top:3px;font-size:11px;color:#000;transform:scaleX(0.917);transform-origin:0 0">ZUCCHINI</div></div>
<div class="a" style="left:1053px;top:360px;width:105px;height:17px;overflow:hidden"><div class="t" style="left:1px;top:3px;font-size:11px;color:#000;transform:scaleX(0.905);transform-origin:0 0">ENRICO</div></div>
<div class="a" style="left:1159px;top:360px;width:98px;height:17px;overflow:hidden"><div class="t" style="left:1px;top:3px;font-size:11px;color:#000;transform:scaleX(1.017);transform-origin:0 0">21/05/1998</div></div>
<div class="a" style="left:214px;top:377px;width:1043px;height:17px;background:#fffffb"></div>
<div class="a" style="left:150px;top:378px;width:62px;height:15px;background:#80bd00;border-bottom:1px solid #555"></div>
<div class="a" style="left:149px;top:393px;width:64px;height:1px;background:#000"></div>
<div class="t" style="left:150px;top:380px;width:62px;text-align:center;font-size:11px;letter-spacing:0.4px;color:#fff">219</div>
<div class="t" style="left:214px;top:380px;width:75px;text-align:right;font-size:11px;color:#000;transform:scaleX(0.948);transform-origin:100% 0">2018</div>
<div class="t" style="left:291px;top:380px;width:166px;text-align:right;font-size:11px;color:#000;transform:scaleX(0.899);transform-origin:100% 0">15</div>
<div class="a" style="left:459px;top:377px;width:112px;height:17px;overflow:hidden"><div class="t" style="left:1px;top:3px;font-size:11px;color:#000;transform:scaleX(0.999);transform-origin:0 0">20/12/2018</div></div>
<div class="a" style="left:572px;top:377px;width:257px;height:17px;background:#000;outline:1px dotted #aaa;outline-offset:-1px"></div>
<div class="a" style="left:572px;top:377px;width:257px;height:17px;overflow:hidden"><div class="t" style="left:1px;top:3px;font-size:11px;color:#fff;transform:scaleX(0.968);transform-origin:0 0">XML generato (da spedire)</div></div>
<div class="a" style="left:830px;top:377px;width:222px;height:17px;overflow:hidden"><div class="t" style="left:1px;top:3px;font-size:11px;color:#000;transform:scaleX(0.881);transform-origin:0 0">CASTELLI</div></div>
<div class="a" style="left:1053px;top:377px;width:105px;height:17px;overflow:hidden"><div class="t" style="left:1px;top:3px;font-size:11px;color:#000;transform:scaleX(0.916);transform-origin:0 0">VALERIA</div></div>
<div class="a" style="left:1159px;top:377px;width:98px;height:17px;overflow:hidden"><div class="t" style="left:1px;top:3px;font-size:11px;color:#000;transform:scaleX(1.008);transform-origin:0 0">09/04/1999</div></div>
<div class="a" style="left:213px;top:285px;width:1px;height:109px;background:#000"></div>
<div class="a" style="left:290px;top:285px;width:1px;height:109px;background:#000"></div>
<div class="a" style="left:458px;top:285px;width:1px;height:109px;background:#000"></div>
<div class="a" style="left:571px;top:285px;width:1px;height:109px;background:#000"></div>
<div class="a" style="left:829px;top:285px;width:1px;height:109px;background:#000"></div>
<div class="a" style="left:1052px;top:285px;width:1px;height:109px;background:#000"></div>
<div class="a" style="left:1158px;top:285px;width:1px;height:109px;background:#000"></div>
<div class="a" style="left:148px;top:676px;width:1110px;height:18px;background:#f0f0f0;border-top:1px solid #fff;border-left:1px solid #fff"></div>
<div class="a" style="left:166px;top:677px;width:17px;height:16px;background:#cdcdcd"></div>
<svg class="a" style="left:148px;top:676px" width="1110" height="18" viewBox="0 0 1110 18"><path d="M11,5.5 L8,9 L11,12.5" fill="none" stroke="#606060" stroke-width="2"/><path d="M1099,5.5 L1102,9 L1099,12.5" fill="none" stroke="#606060" stroke-width="2"/></svg>
<div class="a" style="left:146px;top:699px;width:1113px;height:270px;border-left:2px solid #a0a0a0;border-top:2px solid #a0a0a0;border-right:1px solid #a0a0a0;border-bottom:1px solid #a0a0a0;background:#fff"></div>
<div class="a" style="left:149px;top:701px;width:1108px;height:249px;background:#4599ad"></div>
<div class="a" style="left:149px;top:701px;width:1108px;height:93px;background:#fff"></div>
<div class="a" style="left:150px;top:703px;width:62px;height:21px;background:#000;border-bottom:1px solid #555"></div>
<div class="t" style="left:150px;top:708px;width:62px;text-align:center;font-size:11px;color:#ffff00">4</div>
<div class="a" style="left:149px;top:725px;width:1108px;height:1px;background:#000"></div>
<div class="a" style="left:215px;top:703px;width:90px;height:15px;background:#00838f;border-right:1px solid #b4b4b4"></div>
<div class="t" style="left:216px;top:705px;font-size:12px;color:#fbfbe8">Fattura/RF</div>
<svg class="a" style="left:280px;top:704px" width="22" height="14" viewBox="0 0 22 14"><circle cx="5" cy="4.7" r="3.4" fill="none" stroke="#fff" stroke-width="1.1"/><path d="M2.6,7.1 A3.4,3.4 0 0 1 7.4,2.3" fill="none" stroke="#000" stroke-width="1.2"/><path d="M-0.3,10.6 L2.6,7.6" stroke="#000" stroke-width="1.2"/><path d="M0.5,11.2 L3.4,8.2" stroke="#fff" stroke-width="1"/><path d="M11,5.5 L15.5,1" stroke="#000" stroke-width="1.1" fill="none"/><path d="M15.5,1 L20,5.5" stroke="#fff" stroke-width="1.1" fill="none"/><path d="M11,6.2 L15.5,10.7" stroke="#fff" stroke-width="1.1" fill="none"/><path d="M20,6 L15.5,10.5" stroke="#000" stroke-width="1.1" fill="none"/><path d="M11,5.8 L19.5,5.8" stroke="#000" stroke-width="1" fill="none"/></svg>
<div class="a" style="left:215px;top:720px;width:90px;height:5px;background:#e8e8e8;border-bottom:1px solid #c8c8c8"></div><svg class="a" style="left:215px;top:720px" width="90" height="5" viewBox="0 0 90 5"><path d="M5,1 L10,1 L7.5,4 Z" fill="#000"/><path d="M81,1 L86,1 L83.5,4 Z" fill="#000"/><path d="M14,2.5 L78,2.5" stroke="#000" stroke-width="1" stroke-dasharray="1 1"/></svg>
<div class="a" style="left:308px;top:703px;width:60px;height:15px;background:#00838f;border-right:1px solid #b4b4b4"></div>
<div class="t" style="left:310px;top:705px;font-size:12px;color:#fbfbe8">Data</div>
<svg class="a" style="left:343px;top:704px" width="22" height="14" viewBox="0 0 22 14"><circle cx="5" cy="4.7" r="3.4" fill="none" stroke="#fff" stroke-width="1.1"/><path d="M2.6,7.1 A3.4,3.4 0 0 1 7.4,2.3" fill="none" stroke="#000" stroke-width="1.2"/><path d="M-0.3,10.6 L2.6,7.6" stroke="#000" stroke-width="1.2"/><path d="M0.5,11.2 L3.4,8.2" stroke="#fff" stroke-width="1"/><path d="M11.5,1.5 L20,1.5 M11.5,1.5 L15.8,10" stroke="#000" stroke-width="1.1" fill="none"/><path d="M20,1.8 L15.8,10" stroke="#fff" stroke-width="1.1" fill="none"/></svg>
<div class="a" style="left:308px;top:720px;width:60px;height:5px;background:#e8e8e8;border-bottom:1px solid #c8c8c8"></div><svg class="a" style="left:308px;top:720px" width="60" height="5" viewBox="0 0 60 5"><path d="M5,1 L10,1 L7.5,4 Z" fill="#000"/><path d="M51,1 L56,1 L53.5,4 Z" fill="#000"/><path d="M14,2.5 L48,2.5" stroke="#000" stroke-width="1" stroke-dasharray="1 1"/></svg>
<div class="a" style="left:371px;top:703px;width:83px;height:15px;background:#00838f;border-right:1px solid #b4b4b4"></div>
<div class="t" style="left:372px;top:705px;font-size:12px;color:#fbfbe8">Cognome</div>
<svg class="a" style="left:429px;top:704px" width="22" height="14" viewBox="0 0 22 14"><circle cx="5" cy="4.7" r="3.4" fill="none" stroke="#fff" stroke-width="1.1"/><path d="M2.6,7.1 A3.4,3.4 0 0 1 7.4,2.3" fill="none" stroke="#000" stroke-width="1.2"/><path d="M-0.3,10.6 L2.6,7.6" stroke="#000" stroke-width="1.2"/><path d="M0.5,11.2 L3.4,8.2" stroke="#fff" stroke-width="1"/><path d="M11,5.5 L15.5,1" stroke="#000" stroke-width="1.1" fill="none"/><path d="M15.5,1 L20,5.5" stroke="#fff" stroke-width="1.1" fill="none"/><path d="M11,6.2 L15.5,10.7" stroke="#fff" stroke-width="1.1" fill="none"/><path d="M20,6 L15.5,10.5" stroke="#000" stroke-width="1.1" fill="none"/><path d="M11,5.8 L19.5,5.8" stroke="#000" stroke-width="1" fill="none"/></svg>
<div class="a" style="left:371px;top:720px;width:83px;height:5px;background:#e8e8e8;border-bottom:1px solid #c8c8c8"></div><svg class="a" style="left:371px;top:720px" width="83" height="5" viewBox="0 0 83 5"><path d="M5,1 L10,1 L7.5,4 Z" fill="#000"/><path d="M74,1 L79,1 L76.5,4 Z" fill="#000"/><path d="M14,2.5 L71,2.5" stroke="#000" stroke-width="1" stroke-dasharray="1 1"/></svg>
<div class="a" style="left:457px;top:703px;width:66px;height:15px;background:#00838f;border-right:1px solid #b4b4b4"></div>
<div class="t" style="left:458px;top:705px;font-size:12px;color:#fbfbe8">Nome</div>
<svg class="a" style="left:498px;top:704px" width="22" height="14" viewBox="0 0 22 14"><circle cx="5" cy="4.7" r="3.4" fill="none" stroke="#fff" stroke-width="1.1"/><path d="M2.6,7.1 A3.4,3.4 0 0 1 7.4,2.3" fill="none" stroke="#000" stroke-width="1.2"/><path d="M-0.3,10.6 L2.6,7.6" stroke="#000" stroke-width="1.2"/><path d="M0.5,11.2 L3.4,8.2" stroke="#fff" stroke-width="1"/><path d="M11,5.5 L15.5,1" stroke="#000" stroke-width="1.1" fill="none"/><path d="M15.5,1 L20,5.5" stroke="#fff" stroke-width="1.1" fill="none"/><path d="M11,6.2 L15.5,10.7" stroke="#fff" stroke-width="1.1" fill="none"/><path d="M20,6 L15.5,10.5" stroke="#000" stroke-width="1.1" fill="none"/><path d="M11,5.8 L19.5,5.8" stroke="#000" stroke-width="1" fill="none"/></svg>
<div class="a" style="left:457px;top:720px;width:66px;height:5px;background:#e8e8e8;border-bottom:1px solid #c8c8c8"></div><svg class="a" style="left:457px;top:720px" width="66" height="5" viewBox="0 0 66 5"><path d="M5,1 L10,1 L7.5,4 Z" fill="#000"/><path d="M57,1 L62,1 L59.5,4 Z" fill="#000"/><path d="M14,2.5 L54,2.5" stroke="#000" stroke-width="1" stroke-dasharray="1 1"/></svg>
<div class="a" style="left:526px;top:703px;width:109px;height:15px;background:#00838f;border-right:1px solid #b4b4b4"></div>
<div class="t" style="left:527px;top:705px;font-size:12px;color:#fbfbe8">Data di nascita</div>
<svg class="a" style="left:610px;top:704px" width="22" height="14" viewBox="0 0 22 14"><circle cx="5" cy="4.7" r="3.4" fill="none" stroke="#fff" stroke-width="1.1"/><path d="M2.6,7.1 A3.4,3.4 0 0 1 7.4,2.3" fill="none" stroke="#000" stroke-width="1.2"/><path d="M-0.3,10.6 L2.6,7.6" stroke="#000" stroke-width="1.2"/><path d="M0.5,11.2 L3.4,8.2" stroke="#fff" stroke-width="1"/><path d="M11,5.5 L15.5,1" stroke="#000" stroke-width="1.1" fill="none"/><path d="M15.5,1 L20,5.5" stroke="#fff" stroke-width="1.1" fill="none"/><path d="M11,6.2 L15.5,10.7" stroke="#fff" stroke-width="1.1" fill="none"/><path d="M20,6 L15.5,10.5" stroke="#000" stroke-width="1.1" fill="none"/><path d="M11,5.8 L19.5,5.8" stroke="#000" stroke-width="1" fill="none"/></svg>
<div class="a" style="left:526px;top:720px;width:109px;height:5px;background:#e8e8e8;border-bottom:1px solid #c8c8c8"></div><svg class="a" style="left:526px;top:720px" width="109" height="5" viewBox="0 0 109 5"><path d="M5,1 L10,1 L7.5,4 Z" fill="#000"/><path d="M100,1 L105,1 L102.5,4 Z" fill="#000"/><path d="M14,2.5 L97,2.5" stroke="#000" stroke-width="1" stroke-dasharray="1 1"/></svg>
<div class="a" style="left:638px;top:703px;width:244px;height:15px;background:#00838f;border-right:1px solid #b4b4b4"></div>
<div class="t" style="left:715px;top:705px;font-size:12px;color:#fbfbe8">Descrizione</div>
<svg class="a" style="left:857px;top:704px" width="22" height="14" viewBox="0 0 22 14"><circle cx="5" cy="4.7" r="3.4" fill="none" stroke="#fff" stroke-width="1.1"/><path d="M2.6,7.1 A3.4,3.4 0 0 1 7.4,2.3" fill="none" stroke="#000" stroke-width="1.2"/><path d="M-0.3,10.6 L2.6,7.6" stroke="#000" stroke-width="1.2"/><path d="M0.5,11.2 L3.4,8.2" stroke="#fff" stroke-width="1"/><path d="M11,5.5 L15.5,1" stroke="#000" stroke-width="1.1" fill="none"/><path d="M15.5,1 L20,5.5" stroke="#fff" stroke-width="1.1" fill="none"/><path d="M11,6.2 L15.5,10.7" stroke="#fff" stroke-width="1.1" fill="none"/><path d="M20,6 L15.5,10.5" stroke="#000" stroke-width="1.1" fill="none"/><path d="M11,5.8 L19.5,5.8" stroke="#000" stroke-width="1" fill="none"/></svg>
<div class="a" style="left:638px;top:720px;width:244px;height:5px;background:#e8e8e8;border-bottom:1px solid #c8c8c8"></div><svg class="a" style="left:638px;top:720px" width="244" height="5" viewBox="0 0 244 5"><path d="M5,1 L10,1 L7.5,4 Z" fill="#000"/><path d="M235,1 L240,1 L237.5,4 Z" fill="#000"/><path d="M14,2.5 L232,2.5" stroke="#000" stroke-width="1" stroke-dasharray="1 1"/></svg>
<div class="a" style="left:885px;top:703px;width:94px;height:15px;background:#00838f;border-right:1px solid #b4b4b4"></div>
<div class="t" style="left:886px;top:705px;font-size:12px;color:#fbfbe8">Prestazione</div>
<svg class="a" style="left:954px;top:704px" width="22" height="14" viewBox="0 0 22 14"><circle cx="5" cy="4.7" r="3.4" fill="none" stroke="#fff" stroke-width="1.1"/><path d="M2.6,7.1 A3.4,3.4 0 0 1 7.4,2.3" fill="none" stroke="#000" stroke-width="1.2"/><path d="M-0.3,10.6 L2.6,7.6" stroke="#000" stroke-width="1.2"/><path d="M0.5,11.2 L3.4,8.2" stroke="#fff" stroke-width="1"/><path d="M11,5.5 L15.5,1" stroke="#000" stroke-width="1.1" fill="none"/><path d="M15.5,1 L20,5.5" stroke="#fff" stroke-width="1.1" fill="none"/><path d="M11,6.2 L15.5,10.7" stroke="#fff" stroke-width="1.1" fill="none"/><path d="M20,6 L15.5,10.5" stroke="#000" stroke-width="1.1" fill="none"/><path d="M11,5.8 L19.5,5.8" stroke="#000" stroke-width="1" fill="none"/></svg>
<div class="a" style="left:885px;top:720px;width:94px;height:5px;background:#e8e8e8;border-bottom:1px solid #c8c8c8"></div><svg class="a" style="left:885px;top:720px" width="94" height="5" viewBox="0 0 94 5"><path d="M5,1 L10,1 L7.5,4 Z" fill="#000"/><path d="M85,1 L90,1 L87.5,4 Z" fill="#000"/><path d="M14,2.5 L82,2.5" stroke="#000" stroke-width="1" stroke-dasharray="1 1"/></svg>
<div class="a" style="left:982px;top:703px;width:74px;height:15px;background:#00838f;border-right:1px solid #b4b4b4"></div>
<div class="t" style="left:983px;top:705px;font-size:12px;color:#fbfbe8">Incasso</div>
<svg class="a" style="left:1031px;top:704px" width="22" height="14" viewBox="0 0 22 14"><circle cx="5" cy="4.7" r="3.4" fill="none" stroke="#fff" stroke-width="1.1"/><path d="M2.6,7.1 A3.4,3.4 0 0 1 7.4,2.3" fill="none" stroke="#000" stroke-width="1.2"/><path d="M-0.3,10.6 L2.6,7.6" stroke="#000" stroke-width="1.2"/><path d="M0.5,11.2 L3.4,8.2" stroke="#fff" stroke-width="1"/><path d="M11,5.5 L15.5,1" stroke="#000" stroke-width="1.1" fill="none"/><path d="M15.5,1 L20,5.5" stroke="#fff" stroke-width="1.1" fill="none"/><path d="M11,6.2 L15.5,10.7" stroke="#fff" stroke-width="1.1" fill="none"/><path d="M20,6 L15.5,10.5" stroke="#000" stroke-width="1.1" fill="none"/><path d="M11,5.8 L19.5,5.8" stroke="#000" stroke-width="1" fill="none"/></svg>
<div class="a" style="left:982px;top:720px;width:74px;height:5px;background:#e8e8e8;border-bottom:1px solid #c8c8c8"></div><svg class="a" style="left:982px;top:720px" width="74" height="5" viewBox="0 0 74 5"><path d="M5,1 L10,1 L7.5,4 Z" fill="#000"/><path d="M65,1 L70,1 L67.5,4 Z" fill="#000"/><path d="M14,2.5 L62,2.5" stroke="#000" stroke-width="1" stroke-dasharray="1 1"/></svg>
<div class="a" style="left:1059px;top:703px;width:75px;height:15px;background:#00838f;border-right:1px solid #b4b4b4"></div>
<div class="t" style="left:1060px;top:705px;font-size:12px;color:#fbfbe8">Aliq.IVA</div>
<svg class="a" style="left:1109px;top:704px" width="22" height="14" viewBox="0 0 22 14"><circle cx="5" cy="4.7" r="3.4" fill="none" stroke="#fff" stroke-width="1.1"/><path d="M2.6,7.1 A3.4,3.4 0 0 1 7.4,2.3" fill="none" stroke="#000" stroke-width="1.2"/><path d="M-0.3,10.6 L2.6,7.6" stroke="#000" stroke-width="1.2"/><path d="M0.5,11.2 L3.4,8.2" stroke="#fff" stroke-width="1"/><path d="M11,5.5 L15.5,1" stroke="#000" stroke-width="1.1" fill="none"/><path d="M15.5,1 L20,5.5" stroke="#fff" stroke-width="1.1" fill="none"/><path d="M11,6.2 L15.5,10.7" stroke="#fff" stroke-width="1.1" fill="none"/><path d="M20,6 L15.5,10.5" stroke="#000" stroke-width="1.1" fill="none"/><path d="M11,5.8 L19.5,5.8" stroke="#000" stroke-width="1" fill="none"/></svg>
<div class="a" style="left:1059px;top:720px;width:75px;height:5px;background:#e8e8e8;border-bottom:1px solid #c8c8c8"></div><svg class="a" style="left:1059px;top:720px" width="75" height="5" viewBox="0 0 75 5"><path d="M5,1 L10,1 L7.5,4 Z" fill="#000"/><path d="M66,1 L71,1 L68.5,4 Z" fill="#000"/><path d="M14,2.5 L63,2.5" stroke="#000" stroke-width="1" stroke-dasharray="1 1"/></svg>
<div class="a" style="left:1137px;top:703px;width:78px;height:15px;background:#00838f;border-right:1px solid #b4b4b4"></div>
<div class="t" style="left:1138px;top:705px;font-size:12px;color:#fbfbe8">Pagante</div>
<svg class="a" style="left:1190px;top:704px" width="22" height="14" viewBox="0 0 22 14"><circle cx="5" cy="4.7" r="3.4" fill="none" stroke="#fff" stroke-width="1.1"/><path d="M2.6,7.1 A3.4,3.4 0 0 1 7.4,2.3" fill="none" stroke="#000" stroke-width="1.2"/><path d="M-0.3,10.6 L2.6,7.6" stroke="#000" stroke-width="1.2"/><path d="M0.5,11.2 L3.4,8.2" stroke="#fff" stroke-width="1"/><path d="M11,5.5 L15.5,1" stroke="#000" stroke-width="1.1" fill="none"/><path d="M15.5,1 L20,5.5" stroke="#fff" stroke-width="1.1" fill="none"/><path d="M11,6.2 L15.5,10.7" stroke="#fff" stroke-width="1.1" fill="none"/><path d="M20,6 L15.5,10.5" stroke="#000" stroke-width="1.1" fill="none"/><path d="M11,5.8 L19.5,5.8" stroke="#000" stroke-width="1" fill="none"/></svg>
<div class="a" style="left:1137px;top:720px;width:78px;height:5px;background:#e8e8e8;border-bottom:1px solid #c8c8c8"></div><svg class="a" style="left:1137px;top:720px" width="78" height="5" viewBox="0 0 78 5"><path d="M5,1 L10,1 L7.5,4 Z" fill="#000"/><path d="M69,1 L74,1 L71.5,4 Z" fill="#000"/><path d="M14,2.5 L66,2.5" stroke="#000" stroke-width="1" stroke-dasharray="1 1"/></svg>
<div class="a" style="left:1218px;top:703px;width:39px;height:15px;background:#00838f;border-right:1px solid #b4b4b4"></div>
<div class="a" style="left:1218px;top:720px;width:39px;height:5px;background:#e8e8e8;border-bottom:1px solid #c8c8c8"></div><svg class="a" style="left:1218px;top:720px" width="39" height="5" viewBox="0 0 39 5"><path d="M5,1 L10,1 L7.5,4 Z" fill="#000"/><path d="M14,2.5 L39,2.5" stroke="#000" stroke-width="1" stroke-dasharray="1 1"/></svg>
<div class="a" style="left:214px;top:726px;width:1043px;height:17px;background:#fffffb"></div>
<div class="a" style="left:150px;top:727px;width:62px;height:15px;background:#00a7bd;border-bottom:1px solid #555"></div>
<div class="a" style="left:149px;top:742px;width:64px;height:1px;background:#000"></div>
<div class="t" style="left:150px;top:729px;width:62px;text-align:center;font-size:11px;letter-spacing:0.4px;color:#fff">1116</div>
<div class="a" style="left:214px;top:726px;width:92px;height:17px;overflow:hidden"><div class="t" style="left:1px;top:3px;font-size:11px;color:#000;transform:scaleX(0.963);transform-origin:0 0">15/2018</div></div>
<div class="a" style="left:307px;top:726px;width:62px;height:17px;background:#000;"></div>
<div class="a" style="left:307px;top:726px;width:62px;height:17px;overflow:hidden"><div class="t" style="left:1px;top:3px;font-size:11px;color:#fff;transform:scaleX(0.999);transform-origin:0 0">20/12/2018</div></div>
<div class="a" style="left:370px;top:726px;width:85px;height:17px;overflow:hidden"><div class="t" style="left:1px;top:3px;font-size:11px;color:#000;transform:scaleX(0.881);transform-origin:0 0">CASTELLI</div></div>
<div class="a" style="left:456px;top:726px;width:68px;height:17px;overflow:hidden"><div class="t" style="left:1px;top:3px;font-size:11px;color:#000;transform:scaleX(0.916);transform-origin:0 0">VALERIA</div></div>
<div class="a" style="left:525px;top:726px;width:111px;height:17px;overflow:hidden"><div class="t" style="left:1px;top:3px;font-size:11px;color:#000;transform:scaleX(1.008);transform-origin:0 0">09/04/1999</div></div>
<div class="a" style="left:637px;top:726px;width:246px;height:17px;overflow:hidden"><div class="t" style="left:1px;top:3px;font-size:11px;color:#000;transform:scaleX(0.897);transform-origin:0 0">CORRISPETTIVO PER CONVERSIONI</div></div>
<div class="t" style="left:884px;top:729px;width:95px;text-align:right;font-size:11px;color:#000;transform:scaleX(1.031);transform-origin:100% 0">400,00€</div>
<div class="a" style="left:1058px;top:726px;width:77px;height:17px;overflow:hidden"><div class="t" style="left:1px;top:3px;font-size:11px;color:#000;transform:scaleX(0.981);transform-origin:0 0">IVA22</div></div>
<div class="a" style="left:1217px;top:726px;width:40px;height:17px;overflow:hidden"><div class="t" style="left:1px;top:3px;font-size:11px;color:#000;transform:scaleX(0.898);transform-origin:0 0">Competenze</div></div>
<div class="a" style="left:214px;top:743px;width:1043px;height:17px;background:#e2f4fb"></div>
<div class="a" style="left:150px;top:744px;width:62px;height:15px;background:#00a7bd;border-bottom:1px solid #555"></div>
<div class="a" style="left:149px;top:759px;width:64px;height:1px;background:#000"></div>
<div class="t" style="left:150px;top:746px;width:62px;text-align:center;font-size:11px;letter-spacing:0.4px;color:#fff">1117</div>
<div class="a" style="left:214px;top:743px;width:92px;height:17px;overflow:hidden"><div class="t" style="left:1px;top:3px;font-size:11px;color:#000;transform:scaleX(0.963);transform-origin:0 0">15/2018</div></div>
<div class="a" style="left:307px;top:743px;width:62px;height:17px;overflow:hidden"><div class="t" style="left:1px;top:3px;font-size:11px;color:#000;transform:scaleX(0.999);transform-origin:0 0">20/12/2018</div></div>
<div class="a" style="left:370px;top:743px;width:85px;height:17px;overflow:hidden"><div class="t" style="left:1px;top:3px;font-size:11px;color:#000;transform:scaleX(0.881);transform-origin:0 0">CASTELLI</div></div>
<div class="a" style="left:456px;top:743px;width:68px;height:17px;overflow:hidden"><div class="t" style="left:1px;top:3px;font-size:11px;color:#000;transform:scaleX(0.916);transform-origin:0 0">VALERIA</div></div>
<div class="a" style="left:525px;top:743px;width:111px;height:17px;overflow:hidden"><div class="t" style="left:1px;top:3px;font-size:11px;color:#000;transform:scaleX(1.008);transform-origin:0 0">09/04/1999</div></div>
<div class="a" style="left:637px;top:743px;width:246px;height:17px;overflow:hidden"><div class="t" style="left:1px;top:3px;font-size:11px;color:#000;transform:scaleX(0.919);transform-origin:0 0">BOLLETTINO POSTALE 4028 - 32,00E</div></div>
<div class="t" style="left:884px;top:746px;width:95px;text-align:right;font-size:11px;color:#000;transform:scaleX(1.040);transform-origin:100% 0">32,00€</div>
<div class="a" style="left:1058px;top:743px;width:77px;height:17px;overflow:hidden"><div class="t" style="left:1px;top:3px;font-size:11px;color:#000;transform:scaleX(0.907);transform-origin:0 0">ES15</div></div>
<div class="a" style="left:1217px;top:743px;width:40px;height:17px;overflow:hidden"><div class="t" style="left:1px;top:3px;font-size:11px;color:#000;transform:scaleX(0.898);transform-origin:0 0">Competenze</div></div>
<div class="a" style="left:214px;top:760px;width:1043px;height:17px;background:#fffffb"></div>
<div class="a" style="left:150px;top:761px;width:62px;height:15px;background:#00a7bd;border-bottom:1px solid #555"></div>
<div class="a" style="left:149px;top:776px;width:64px;height:1px;background:#000"></div>
<div class="t" style="left:150px;top:763px;width:62px;text-align:center;font-size:11px;letter-spacing:0.4px;color:#fff">1118</div>
<div class="a" style="left:214px;top:760px;width:92px;height:17px;overflow:hidden"><div class="t" style="left:1px;top:3px;font-size:11px;color:#000;transform:scaleX(0.963);transform-origin:0 0">15/2018</div></div>
<div class="a" style="left:307px;top:760px;width:62px;height:17px;overflow:hidden"><div class="t" style="left:1px;top:3px;font-size:11px;color:#000;transform:scaleX(0.999);transform-origin:0 0">20/12/2018</div></div>
<div class="a" style="left:370px;top:760px;width:85px;height:17px;overflow:hidden"><div class="t" style="left:1px;top:3px;font-size:11px;color:#000;transform:scaleX(0.881);transform-origin:0 0">CASTELLI</div></div>
<div class="a" style="left:456px;top:760px;width:68px;height:17px;overflow:hidden"><div class="t" style="left:1px;top:3px;font-size:11px;color:#000;transform:scaleX(0.916);transform-origin:0 0">VALERIA</div></div>
<div class="a" style="left:525px;top:760px;width:111px;height:17px;overflow:hidden"><div class="t" style="left:1px;top:3px;font-size:11px;color:#000;transform:scaleX(1.008);transform-origin:0 0">09/04/1999</div></div>
<div class="a" style="left:637px;top:760px;width:246px;height:17px;overflow:hidden"><div class="t" style="left:1px;top:3px;font-size:11px;color:#000;transform:scaleX(0.884);transform-origin:0 0">SPESE DI SPEDIZIONE</div></div>
<div class="t" style="left:884px;top:763px;width:95px;text-align:right;font-size:11px;color:#000;transform:scaleX(1.054);transform-origin:100% 0">6,86€</div>
<div class="a" style="left:1058px;top:760px;width:77px;height:17px;overflow:hidden"><div class="t" style="left:1px;top:3px;font-size:11px;color:#000;transform:scaleX(0.907);transform-origin:0 0">ES15</div></div>
<div class="a" style="left:1217px;top:760px;width:40px;height:17px;overflow:hidden"><div class="t" style="left:1px;top:3px;font-size:11px;color:#000;transform:scaleX(1.020);transform-origin:0 0">Rimborso</div></div>
<div class="a" style="left:214px;top:777px;width:1043px;height:17px;background:#e2f4fb"></div>
<div class="a" style="left:150px;top:778px;width:62px;height:15px;background:#00a7bd;border-bottom:1px solid #555"></div>
<div class="a" style="left:149px;top:793px;width:64px;height:1px;background:#000"></div>
<div class="t" style="left:150px;top:780px;width:62px;text-align:center;font-size:11px;letter-spacing:0.4px;color:#fff">1119</div>
<div class="a" style="left:214px;top:777px;width:92px;height:17px;overflow:hidden"><div class="t" style="left:1px;top:3px;font-size:11px;color:#000;transform:scaleX(0.963);transform-origin:0 0">15/2018</div></div>
<div class="a" style="left:307px;top:777px;width:62px;height:17px;overflow:hidden"><div class="t" style="left:1px;top:3px;font-size:11px;color:#000;transform:scaleX(0.999);transform-origin:0 0">20/12/2018</div></div>
<div class="a" style="left:370px;top:777px;width:85px;height:17px;overflow:hidden"><div class="t" style="left:1px;top:3px;font-size:11px;color:#000;transform:scaleX(0.881);transform-origin:0 0">CASTELLI</div></div>
<div class="a" style="left:456px;top:777px;width:68px;height:17px;overflow:hidden"><div class="t" style="left:1px;top:3px;font-size:11px;color:#000;transform:scaleX(0.916);transform-origin:0 0">VALERIA</div></div>
<div class="a" style="left:525px;top:777px;width:111px;height:17px;overflow:hidden"><div class="t" style="left:1px;top:3px;font-size:11px;color:#000;transform:scaleX(1.008);transform-origin:0 0">09/04/1999</div></div>
<div class="a" style="left:637px;top:777px;width:246px;height:17px;overflow:hidden"><div class="t" style="left:1px;top:3px;font-size:11px;color:#000;transform:scaleX(0.980);transform-origin:0 0">ANTICIPAZIONI ART. 15 DPR 633/72 D.T.T.</div></div>
<div class="t" style="left:884px;top:780px;width:95px;text-align:right;font-size:11px;color:#000;transform:scaleX(1.040);transform-origin:100% 0">29,76€</div>
<div class="a" style="left:1058px;top:777px;width:77px;height:17px;overflow:hidden"><div class="t" style="left:1px;top:3px;font-size:11px;color:#000;transform:scaleX(0.907);transform-origin:0 0">ES15</div></div>
<div class="a" style="left:1217px;top:777px;width:40px;height:17px;overflow:hidden"><div class="t" style="left:1px;top:3px;font-size:11px;color:#000;transform:scaleX(0.898);transform-origin:0 0">Competenze</div></div>
<div class="a" style="left:213px;top:702px;width:1px;height:92px;background:#000"></div>
<div class="a" style="left:306px;top:702px;width:1px;height:92px;background:#000"></div>
<div class="a" style="left:369px;top:702px;width:1px;height:92px;background:#000"></div>
<div class="a" style="left:455px;top:702px;width:1px;height:92px;background:#000"></div>
<div class="a" style="left:524px;top:702px;width:1px;height:92px;background:#000"></div>
<div class="a" style="left:636px;top:702px;width:1px;height:92px;background:#000"></div>
<div class="a" style="left:883px;top:702px;width:1px;height:92px;background:#000"></div>
<div class="a" style="left:980px;top:702px;width:1px;height:92px;background:#000"></div>
<div class="a" style="left:1057px;top:702px;width:1px;height:92px;background:#000"></div>
<div class="a" style="left:1135px;top:702px;width:1px;height:92px;background:#000"></div>
<div class="a" style="left:1216px;top:702px;width:1px;height:92px;background:#000"></div>
<div class="a" style="left:148px;top:950px;width:1110px;height:18px;background:#f0f0f0;border-top:1px solid #fff;border-left:1px solid #fff"></div>
<div class="a" style="left:166px;top:951px;width:17px;height:16px;background:#cdcdcd"></div>
<svg class="a" style="left:148px;top:950px" width="1110" height="18" viewBox="0 0 1110 18"><path d="M11,5.5 L8,9 L11,12.5" fill="none" stroke="#606060" stroke-width="2"/><path d="M1099,5.5 L1102,9 L1099,12.5" fill="none" stroke="#606060" stroke-width="2"/></svg>
<!-- context menu -->
<div class="a" style="left:758px;top:386px;width:141px;height:167px;background:#f2f2f2;border:1px solid #cccccc;box-shadow:2px 2px 3px rgba(0,0,0,0.45)"></div>
<div class="a" style="left:789px;top:480px;width:107px;height:1px;background:#d7d7d7"></div>
<div class="a" style="left:761px;top:506px;width:132px;height:22px;background:#91c9f7"></div>
<div class="t" style="left:793px;top:394px;font-size:12px">Modifica</div>
<div class="t" style="left:793px;top:416.0px;font-size:12px">Nuovo</div>
<div class="t" style="left:793px;top:438px;font-size:12px;color:#8d8d8d">Registra</div>
<div class="t" style="left:793px;top:460px;font-size:12px">Rimuovi</div>
<div class="t" style="left:793px;top:489px;font-size:12px">Tabellone</div>
<div class="t" style="left:793px;top:511.0px;font-size:12px">XML</div>
<div class="t" style="left:793px;top:533px;font-size:12px">Stampe</div>
<svg class="a" style="left:880px;top:488px" width="10" height="60" viewBox="0 488 10 60">
<path d="M3,491 L7,495 L3,499 M3,513 L7,517 L3,521 M3,535 L7,539 L3,543" fill="none" stroke="#444" stroke-width="1.1"/>
</svg>
<div class="a" style="left:893px;top:503px;width:154px;height:116px;background:#f2f2f2;border:1px solid #cccccc;box-shadow:2px 2px 3px rgba(0,0,0,0.45)"></div>
<div class="a" style="left:896px;top:550px;width:148px;height:22px;background:#91c9f7"></div>
<div class="t" style="left:928px;top:511.0px;font-size:12px">Genera XML</div>
<div class="t" style="left:928px;top:533.0px;font-size:12px">Apri</div>
<div class="t" style="left:928px;top:555.0px;font-size:12px">Esporta...</div>
<div class="t" style="left:928px;top:577.0px;font-size:12px">Copia (i file)</div>
<div class="t" style="left:928px;top:599.0px;font-size:12px">Invia</div>

</body></html>
